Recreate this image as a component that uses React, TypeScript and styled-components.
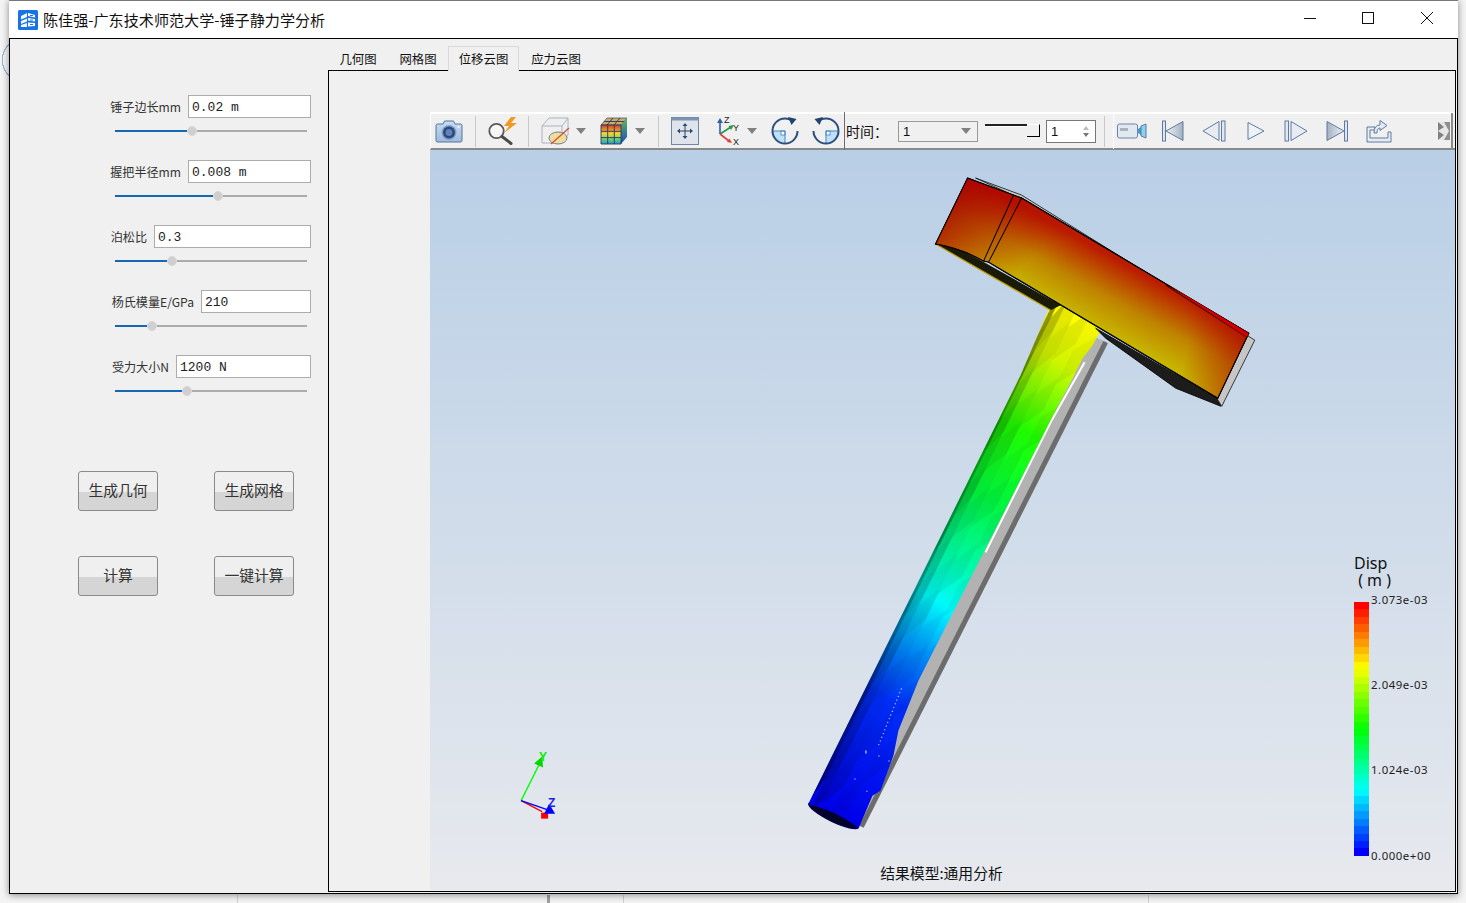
import styled, { createGlobalStyle } from 'styled-components'

const GlobalStyle = createGlobalStyle`
  html, body {
    margin: 0;
    padding: 0;
    overflow: hidden;
  }
  * {
    box-sizing: border-box;
  }
`

const cjk = `"Noto Sans CJK SC", "Noto Sans", sans-serif`

const Desktop = styled.div`
  width: 1466px;
  height: 903px;
  padding-left: 9px;
  font-family: ${cjk};
  background:
    radial-gradient(circle at 24px 60px, transparent 21px, #8fb4d6 21px, #8fb4d6 22px, transparent 22.5px),
    linear-gradient(#d0d0d0, #d0d0d0) 237px 895px / 1px 8px no-repeat,
    linear-gradient(#a0a0a0, #a0a0a0) 547px 895px / 3px 8px no-repeat,
    linear-gradient(#d0d0d0, #d0d0d0) 623px 895px / 1px 8px no-repeat,
    linear-gradient(#d0d0d0, #d0d0d0) 1148px 895px / 1px 8px no-repeat,
    #f4f4f4;
`

const Window = styled.div`
  width: 1449px;
  height: 894px;
  display: flex;
  flex-direction: column;
  background: #fff;
  border-top: 1px solid #777;
  box-shadow: 0 1px 7px rgba(0, 0, 0, 0.45);
`

const TitleBar = styled.header`
  height: 37px;
  flex: none;
  display: flex;
  align-items: center;
  padding-left: 9px;
`

const AppTitle = styled.span`
  margin: 0 0 2px 5px;
  font-size: 15.1px;
  color: #111;
  white-space: nowrap;
`

const WinControls = styled.div`
  display: flex;
  margin: 0 2px 3px auto;
`

const WinButton = styled.span`
  width: 58.5px;
  height: 34px;
  display: flex;
  align-items: center;
  justify-content: center;
`

const Client = styled.main`
  flex: 1;
  min-height: 0;
  display: flex;
  background: #f0f0f0;
  border: 1px solid #000;
`

const SidePanel = styled.aside`
  width: 318px;
  flex: none;
  padding-top: 56px;
`

const Field = styled.div`
  height: 65px;
  padding-right: 17px;
`

const FieldRow = styled.div`
  height: 23px;
  display: flex;
  justify-content: flex-end;
  align-items: center;
  gap: 7px;
`

const FieldLabel = styled.label`
  font-size: 12.1px;
  color: #333;
  white-space: nowrap;
`

const FieldInput = styled.div<{ $w: number }>`
  width: ${(p) => p.$w}px;
  height: 23px;
  background: #fff;
  border: 1px solid #acacac;
  padding-left: 3px;
  font: 13px/24px "Liberation Mono", monospace;
  color: #222;
`

const Slider = styled.div`
  width: 192px;
  height: 11px;
  margin: 7px 0 0 105px;
  display: flex;
  align-items: center;
`

const SliderFill = styled.span<{ $w: number }>`
  width: ${(p) => p.$w}px;
  height: 2px;
  background: #1768b4;
`

const SliderThumb = styled.span`
  width: 10px;
  height: 10px;
  flex: none;
  border-radius: 50%;
  background: #cfcfcf;
  border: 1px solid #d8d8d8;
`

const SliderRest = styled.span`
  flex: 1;
  height: 2px;
  background: #ababab;
`

const ButtonGrid = styled.div`
  display: grid;
  grid-template-columns: 80px 80px;
  grid-auto-rows: 40px;
  column-gap: 56px;
  row-gap: 45px;
  margin: 51px 0 0 68px;
`

const ActionButton = styled.button`
  border: 1px solid #8a8a8a;
  border-radius: 3px;
  padding: 0 0 3px;
  font-family: ${cjk};
  font-size: 14.8px;
  color: #333;
  background: linear-gradient(#efefef 52%, #d5d5d5 52%);
`

const TabArea = styled.section`
  flex: 1;
  min-width: 0;
  display: flex;
  flex-direction: column;
  padding-top: 7px;
`

const TabBar = styled.nav`
  height: 25px;
  flex: none;
  display: flex;
  position: relative;
  z-index: 1;
  margin-bottom: -1px;
`

const Tab = styled.span<{ $w: number; $active?: boolean }>`
  width: ${(p) => p.$w}px;
  height: 25px;
  display: flex;
  align-items: center;
  justify-content: center;
  font-size: 12.4px;
  color: #111;
  border: 1px solid ${(p) => (p.$active ? '#d9d9d9' : 'transparent')};
  border-bottom: none;
  background: ${(p) => (p.$active ? '#f0f0f0' : 'transparent')};
`

const TabPanel = styled.div`
  flex: 1;
  min-height: 0;
  margin: 0 1px 1px 0;
  padding: 41px 0 1px 101px;
  background: #f0f0f0;
  border: 1px solid #000;
`

const Viewer = styled.div`
  height: 100%;
  display: flex;
  flex-direction: column;
`

const ToolBar = styled.div`
  height: 38px;
  flex: none;
  display: flex;
  align-items: center;
  background: #f0f0f0;
  border-top: 2px solid #fff;
  border-left: 1px solid #fff;
  border-bottom: 2px solid #8a8a8a;
`

const Tool = styled.span<{ $ml: number }>`
  display: flex;
  flex: none;
  margin-left: ${(p) => p.$ml}px;
`

const Sep = styled.span<{ $ml: number }>`
  width: 1px;
  height: 31px;
  flex: none;
  margin-left: ${(p) => p.$ml}px;
  background: #c8c8c8;
`

const DarkSep = styled(Sep)`
  height: 38px;
  background: #6e6e6e;
`

const Caret = styled.span<{ $ml: number }>`
  width: 0;
  height: 0;
  flex: none;
  margin-left: ${(p) => p.$ml}px;
  border-left: 5px solid transparent;
  border-right: 5px solid transparent;
  border-top: 6px solid #808080;
`

const TimeLabel = styled.span`
  width: 38px;
  flex: none;
  margin-left: 1px;
  font-size: 14px;
  color: #111;
  white-space: nowrap;
`

const Combo = styled.div`
  width: 80px;
  height: 21px;
  flex: none;
  margin-left: 14px;
  padding: 0 6px 0 4px;
  display: flex;
  align-items: center;
  justify-content: space-between;
  border: 1px solid #9a9a9a;
  font: 13px "Liberation Sans", sans-serif;
  color: #111;
`

const TimeSlider = styled.div`
  width: 55px;
  height: 14px;
  flex: none;
  margin-left: 7px;
  display: flex;
  align-items: flex-start;
`

const TimeTrack = styled.span`
  flex: 1;
  height: 3px;
  border-top: 2px solid #222;
  border-bottom: 1px solid #fff;
`

const TimeHandle = styled.span`
  width: 13px;
  height: 13px;
  border-right: 1px solid #000;
  border-bottom: 1px solid #000;
  border-top: 1px solid #fff;
  background: #f0f0f0;
`

const Spin = styled.div`
  width: 50px;
  height: 23px;
  flex: none;
  margin-left: 6px;
  padding: 0 6px 0 4px;
  display: flex;
  align-items: center;
  justify-content: space-between;
  background: #fff;
  border: 1px solid #777;
  font: 13px "Liberation Sans", sans-serif;
  color: #111;
`

const SpinArrows = styled.span`
  display: flex;
  flex-direction: column;
  gap: 3px;
`

const SpinArrow = styled.span<{ $down?: boolean }>`
  width: 0;
  height: 0;
  border-left: 3px solid transparent;
  border-right: 3px solid transparent;
  ${(p) => (p.$down ? 'border-top: 4px solid #777;' : 'border-bottom: 4px solid #bbb;')}
`

const PlayBar = styled.div`
  flex: 1;
  height: 36px;
  margin: 0 2px 0 8px;
  display: flex;
  align-items: center;
  border-left: 1px solid #fff;
  border-right: 2px solid #8a8a8a;
`

const Viewport = styled.div`
  flex: 1;
  min-height: 0;
  position: relative;
  background: linear-gradient(#b9cfe6, #e7e9ee);
`

const Scene = styled.svg`
  display: block;
  width: 100%;
  height: 100%;
`

const Legend = styled.div`
  position: absolute;
  left: 924px;
  top: 405px;
  width: 100px;
`

const LegendTitle = styled.div`
  font: 16px/17px "Noto Sans", sans-serif;
  color: #111;
`

const LegendBody = styled.div`
  display: flex;
  margin-top: 13px;
`

const LegendBar = styled.div`
  width: 15px;
  height: 254px;
  display: flex;
  flex-direction: column;
`

const LegendTicks = styled.div`
  height: 267px;
  margin: -8px 0 0 2px;
  display: flex;
  flex-direction: column;
  justify-content: space-between;
  font: 11.4px/1 "Noto Sans", sans-serif;
  letter-spacing: 0.55px;
  color: #222;
`

const ResultCaption = styled.div`
  position: absolute;
  left: 0;
  right: 2px;
  bottom: 7px;
  text-align: center;
  font-size: 14.8px;
  color: #111;
`

const fields = [
  { label: '锤子边长mm', value: '0.02 m', w: 123, fill: 72 },
  { label: '握把半径mm', value: '0.008 m', w: 123, fill: 98 },
  { label: '泊松比', value: '0.3', w: 157, fill: 52 },
  { label: '杨氏模量E/GPa', value: '210', w: 110, fill: 32 },
  { label: '受力大小N', value: '1200 N', w: 135, fill: 67 },
]

const legendColor = (t: number) => {
  const c = (v: number) => Math.round(Math.max(0, Math.min(1, v)) * 255)
  const r = c(2 - t * 4 + 0)
  const g = t < 0.25 ? c(t * 4) : t > 0.75 ? c((1 - t) * 4) : 255
  const b = c(t * 4 - 2)
  return `rgb(${r},${g},${b})`
}

// top of the bar is red, bottom is blue
const bands = Array.from({ length: 34 }, (_, i) => legendColor(i / 33))

// shaded quads that give the handle its faceted look
const facets = () => {
  const out: { d: string; o: number }[] = []
  const cols = [0, 0.08, 0.22, 0.44, 0.7, 1]
  const rows = 15
  const p = (u: number, v: number) => {
    const lx = 1052 + (808 - 1052) * v
    const ly = 304 + (803 - 304) * v
    const rx = 1100 + (858 - 1100) * v
    const ry = 330 + (828 - 330) * v
    return `${(lx + (rx - lx) * u).toFixed(1)},${(ly + (ry - ly) * u).toFixed(1)}`
  }
  for (let i = 0; i < rows; i++) {
    for (let j = 0; j < cols.length - 1; j++) {
      const shift = ((j % 2) * 0.5) / rows
      const v0 = (i - 0.5) / rows + shift
      const v1 = (i + 0.5) / rows + shift
      const jitter = ((i * 7 + j * 13) % 5) * 0.018
      const base = [0.42, 0.2, 0.07, 0.02, 0][j]
      // diamonds: the two long sides lean towards the neighbour column
      const lean = 0.35 / rows
      out.push({
        d: `${p(cols[j], v0 + lean)} ${p(cols[j + 1], v0 - lean)} ${p(cols[j + 1], v1 - lean)} ${p(cols[j], v1 + lean)}`,
        o: base + jitter,
      })
    }
  }
  return out
}

const BrandIcon = () => (
  <svg width="20" height="20" viewBox="0 0 20 20">
    <rect width="20" height="20" rx="1.5" fill="#1873e6" />
    <path d="M3 6l6-3v4L3 9.5zM3 11l6-2.5v3L3 14zM3 15l6-2v4H3z" fill="#fff" opacity="0.95" />
    <path d="M10 3l7 2v2.5l-7-1.5zM10 8l7 1v2.5l-7-1zM10 12.5l7 .5v3l-7 .5z" fill="#fff" />
    <path d="M12 5.5h3M12 10h3M12 14.5h3" stroke="#1873e6" strokeWidth="1" />
  </svg>
)

const CameraIcon = () => (
  <svg width="28" height="24" viewBox="0 0 28 24">
    <defs>
      <linearGradient id="camBody" x1="0" y1="0" x2="0" y2="1">
        <stop offset="0" stopColor="#c9dcf0" />
        <stop offset="1" stopColor="#9dbbdc" />
      </linearGradient>
    </defs>
    <path d="M1 6.5Q1 5 2.5 5H8l1.5-3h9L20 5h5.5Q27 5 27 6.5v15q0 1.5-1.5 1.5h-23Q1 23 1 21.5z" fill="url(#camBody)" stroke="#54749f" />
    <circle cx="14" cy="13.5" r="7.5" fill="#7f9cc8" />
    <circle cx="14" cy="13.5" r="6" fill="#2d4776" />
    <circle cx="14" cy="13.5" r="3.4" fill="#5f84bc" />
    <circle cx="23.5" cy="8" r="1" fill="#fff" />
  </svg>
)

const SearchBoltIcon = () => (
  <svg width="30" height="28" viewBox="0 0 30 28">
    <circle cx="8.500" cy="14" r="7.200" fill="#f6f6f6" stroke="#5a5a5a" strokeWidth="1.8" />
    <path d="M14 19.500l9 7" stroke="#4a4a4a" strokeWidth="3" strokeLinecap="round" />
    <path d="M23 0l-7 9h5l-5 7 13-10h-6l5-6z" fill="#ef9a25" />
  </svg>
)

const ClipCubeIcon = () => (
  <svg width="30" height="28" viewBox="0 0 30 28">
    <path d="M1 9l7-8h19v17l-6 8H1z" fill="#efefef" stroke="#a9b4c4" />
    <path d="M1 9h20v17M21 9l6-8" fill="none" stroke="#a9b4c4" />
    <ellipse cx="17" cy="21" rx="9" ry="6" fill="#f1dc9a" stroke="#6c7f99" />
    <path d="M10 27L28 11" stroke="#c8553f" strokeWidth="1.4" />
  </svg>
)

const ContourCubeIcon = () => (
  <svg width="28" height="28" viewBox="0 0 28 28">
    <defs>
      <linearGradient id="cubeFront" x1="0" y1="0" x2="0" y2="1">
        <stop offset="0" stopColor="#d83a2a" />
        <stop offset="0.45" stopColor="#f5d13a" />
        <stop offset="0.75" stopColor="#62d07a" />
        <stop offset="1" stopColor="#2a90d8" />
      </linearGradient>
      <linearGradient id="cubeSide" x1="0" y1="0" x2="0" y2="1">
        <stop offset="0" stopColor="#5cb858" />
        <stop offset="1" stopColor="#1c4fb8" />
      </linearGradient>
    </defs>
    <path d="M1 8l6-7h20l-6 7z" fill="#cfa86b" stroke="#33506f" strokeWidth="0.7" />
    <path d="M21 8l6-7v19l-6 7z" fill="url(#cubeSide)" />
    <rect x="1" y="8" width="20" height="19" fill="url(#cubeFront)" />
    <path d="M1 8h20v19H1zM7.7 8v19M14.3 8v19M1 14.3h20M1 20.6h20M7 8l6-7M14 8l6-7M4 4.5h20" fill="none" stroke="#263b52" strokeWidth="0.9" />
  </svg>
)

const FitIcon = () => (
  <svg width="28" height="28" viewBox="0 0 28 28">
    <rect x="0.5" y="0.5" width="27" height="27" fill="#dfe4ec" stroke="#6f86a8" />
    <rect x="0.5" y="0.5" width="27" height="3" fill="#7e93b3" />
    <path d="M14 8v12M8 14h12" stroke="#2a3f5f" />
    <path d="M14 6l2.500 3h-5zM14 22l2.500-3h-5zM6 14l3-2.500v5zM22 14l-3-2.500v5z" fill="#2a4a72" />
  </svg>
)

const AxesIcon = () => (
  <svg width="24" height="30" viewBox="0 0 24 30">
    <path d="M4 18V6" stroke="#2c5fb0" strokeWidth="1.6" />
    <path d="M4 2l3 5H1z" fill="#2c5fb0" />
    <path d="M4 18l11-7" stroke="#1f9a4a" strokeWidth="1.6" />
    <path d="M18 9l-3 5-2.500-4z" fill="#1f9a4a" />
    <path d="M4 18l9 7" stroke="#e23c3c" strokeWidth="1.6" />
    <path d="M16 27l-5-1 2.500-3.500z" fill="#e23c3c" />
    <text x="8" y="7" fontSize="9" fontFamily="Liberation Sans, sans-serif" fill="#222">Z</text>
    <text x="17" y="15" fontSize="9" fontFamily="Liberation Sans, sans-serif" fill="#222">Y</text>
    <text x="17" y="29" fontSize="9" fontFamily="Liberation Sans, sans-serif" fill="#222">X</text>
  </svg>
)

const RotateIcon = ({ flip }: { flip?: boolean }) => (
  <svg width="28" height="28" viewBox="0 0 28 28">
    <g transform={flip ? 'translate(28 0) scale(-1 1)' : undefined}>
      <path d="M1.500 14A12.500 12.500 0 0 0 14 26.500V14z" fill="#bfe0f8" />
      <rect x="10" y="14" width="4" height="4" fill="#fff" stroke="#3f7fb8" strokeWidth="0.8" />
      <path d="M1.500 14h12.500v12.500" fill="none" stroke="#3f88c8" strokeWidth="1" />
      <path d="M21 3.500A12.500 12.500 0 0 0 14 1.500 12.500 12.500 0 1 0 26.500 14" fill="none" stroke="#2c4f7c" strokeWidth="2" />
      <path d="M17 0l8.500 2-5 6z" fill="#20446e" />
    </g>
  </svg>
)

const VideoIcon = () => (
  <svg width="30" height="16" viewBox="0 0 30 16">
    <rect x="0.500" y="1" width="20" height="14" rx="2" fill="#e2e8f0" stroke="#6d84a6" />
    <rect x="3" y="5" width="8" height="3" fill="#a8b2c0" />
    <path d="M21 6l3-2v8l-3-2z" fill="#3e9fd0" />
    <path d="M24 3l5-2v14l-5-2z" fill="#8fd0e8" stroke="#5b7ba5" />
  </svg>
)

const FirstIcon = () => (
  <svg width="22" height="22" viewBox="0 0 22 22">
    <defs>
      <linearGradient id="stepFill" x1="0" y1="0" x2="1" y2="0">
        <stop offset="0" stopColor="#eef1f5" />
        <stop offset="1" stopColor="#a4b0c0" />
      </linearGradient>
    </defs>
    <rect x="0.500" y="1" width="3" height="20" fill="#dfe5ee" stroke="#5f7ba3" />
    <path d="M4 11L21 1.500v19z" fill="url(#stepFill)" stroke="#5f7ba3" />
  </svg>
)

const PrevIcon = () => (
  <svg width="24" height="22" viewBox="0 0 24 22">
    <path d="M1 11l16-9.500v19z" fill="#e8ecf2" stroke="#5f7ba3" />
    <rect x="19.500" y="1" width="3.500" height="20" fill="#e2e8f0" stroke="#5f7ba3" />
  </svg>
)

const PlayIcon = () => (
  <svg width="18" height="20" viewBox="0 0 18 20">
    <path d="M1 1.500L17 10 1 18.500z" fill="#eef1f6" stroke="#5f7ba3" />
  </svg>
)

const NextIcon = () => (
  <svg width="24" height="22" viewBox="0 0 24 22">
    <rect x="1" y="1" width="3.500" height="20" fill="#e2e8f0" stroke="#5f7ba3" />
    <path d="M7 1.500l16 9.500-16 9.500z" fill="#e8ecf2" stroke="#5f7ba3" />
  </svg>
)

const LastIcon = () => (
  <svg width="22" height="22" viewBox="0 0 22 22">
    <defs>
      <linearGradient id="stepFillEnd" x1="0" y1="0" x2="1" y2="0">
        <stop offset="0" stopColor="#a4b0c0" />
        <stop offset="1" stopColor="#eef1f5" />
      </linearGradient>
    </defs>
    <path d="M1 1.500L18 11 1 20.500z" fill="url(#stepFillEnd)" stroke="#5f7ba3" />
    <rect x="18.500" y="1" width="3" height="20" fill="#dfe5ee" stroke="#5f7ba3" />
  </svg>
)

const ExportIcon = () => (
  <svg width="26" height="24" viewBox="0 0 26 24">
    <path d="M1 8h8v3H4v8h18v-6h3v10H1z" fill="#e6ebf2" stroke="#5f7ba3" />
    <path d="M8 14q0-8 6-8V1.500l7 5-7 5V9q-3 0-3 5z" fill="#e6ebf2" stroke="#5f7ba3" />
  </svg>
)

const OverflowIcon = () => (
  <svg width="12" height="18" viewBox="0 0 12 18" opacity="0.8">
    <rect width="12" height="18" fill="#e6e6e6" />
    <path d="M0 0l6 5-6 4 6 4-6 5z" fill="#666" />
    <path d="M6 0h6v18H6l5-9z" fill="#777" />
  </svg>
)

const Hammer = () => (
  <>
    <defs>
      <linearGradient id="handleJet" gradientUnits="userSpaceOnUse" x1="1072" y1="320" x2="833" y2="812">
        <stop offset="0" stopColor="#ffff00" />
        <stop offset="0.08" stopColor="#d8ff00" />
        <stop offset="0.22" stopColor="#20ff00" />
        <stop offset="0.36" stopColor="#00ff40" />
        <stop offset="0.49" stopColor="#00ffb0" />
        <stop offset="0.57" stopColor="#00ffff" />
        <stop offset="0.67" stopColor="#0090ff" />
        <stop offset="0.77" stopColor="#0030ff" />
        <stop offset="1" stopColor="#0000e8" />
      </linearGradient>
      <linearGradient id="headBase" gradientUnits="userSpaceOnUse" x1="1120" y1="262" x2="1085" y2="325">
        <stop offset="0" stopColor="#bb1c00" />
        <stop offset="0.5" stopColor="#bf8200" />
        <stop offset="1" stopColor="#c8bc00" />
      </linearGradient>
      <radialGradient id="headEnds" gradientUnits="userSpaceOnUse" cx="0" cy="0" r="1" gradientTransform="translate(1085 345) rotate(29) scale(195 240)">
        <stop offset="0.5" stopColor="#b00000" stopOpacity="0" />
        <stop offset="1" stopColor="#a80000" stopOpacity="0.85" />
      </radialGradient>
      <clipPath id="handleClip">
        <path d="M1052,300 L1020,375 L808,803 Q830,820 858,828 L872,795 L880,790 L893,755 L898,730 L918,680 L1050,420 L1072,378 L1082,358 L1092,345 L1102,326 Z" />
      </clipPath>
    </defs>

    {/* grey back faces of the undeformed handle */}
    <path d="M1090,335 L1106,342 L862,826 L855,825 L850,780 Z" fill="#b2b2b2" />
    <path d="M1105,342 L861,826" stroke="#6c6c6c" strokeWidth="5" />
    <path d="M1084,362 L1050,422 L985,552" stroke="#fff" strokeWidth="2" fill="none" />

    <ellipse cx="833" cy="815" rx="28" ry="6.500" transform="rotate(26 833 815)" fill="#000050" />
    <g clipPath="url(#handleClip)">
      <rect x="800" y="295" width="310" height="540" fill="url(#handleJet)" />
      {facets().map((f, i) => (
        <polygon key={i} points={f.d} fill="#000" opacity={f.o} />
      ))}
    </g>
    <path d="M808,804 Q832,808 858,827 Q830,826 808,804 Z" fill="#02022a" />
    <path d="M901,688 L878,745" stroke="#fff" strokeWidth="1" strokeDasharray="1 3" />
    <path d="M865,750h1v3h-1zM854,778h1v1h-1zM866,790h1v1h-1zM888,760h1v1h-1zM878,755h1v1h-1z" fill="#fff" />

    {/* underside of the head */}
    <path d="M935,244 Q960,248 983,262 L1060,305 L1050,310 Z" fill="#1a1a08" />
    <path d="M935,244 L1050,310" stroke="#c8a400" strokeWidth="1.200" />
    <path d="M1095,328 L1216,398 L1220,406 L1175,388 L1105,338 Z" fill="#1c1c1c" stroke="#000" strokeWidth="0.800" />

    {/* grey back sliver of the head */}
    <path d="M975,178 L1021,195 L1254,340 L1221,406 L1216,398 L1248,333 L1021,199 Z" fill="#c6c6c6" stroke="#111" strokeWidth="0.800" />

    <g stroke="#000" strokeWidth="1">
      <path d="M967,178 L1021,198 L1248,333 L1217,398 L988,262 L983,261 Q960,248 935,244 Z" fill="url(#headBase)" />
      <path d="M967,178 L1021,198 L1248,333 L1217,398 L988,262 L983,261 Q960,248 935,244 Z" fill="url(#headEnds)" />
      <path d="M1013,195 L983,261 M1021,198 L988,262" fill="none" />
      <path d="M1165,285 L1246,337" fill="none" strokeWidth="0.800" />
    </g>
    <path d="M1165,283 L1248,333 L1246,337 Z" fill="#d00000" />
  </>
)

const Triad = () => (
  <g>
    <path d="M521,800 L540,762" stroke="#00ff00" strokeWidth="1.300" />
    <path d="M542,756 L543,767 L534,763 Z" fill="#00d800" />
    <text x="539" y="760" fontSize="12" fontWeight="700" fontFamily="Liberation Sans, sans-serif" fill="#00f000">Y</text>
    <path d="M521,800 L542,811" stroke="#ff0000" strokeWidth="1.200" />
    <path d="M521,800 L547,809" stroke="#0000ff" strokeWidth="1.500" />
    <path d="M541,812 L548,812 L548,818 L541,818 Z" fill="#ff0000" />
    <path d="M549,803 L555,813 L544,813 Z" fill="#0000ff" />
    <text x="548" y="806" fontSize="12" fontWeight="700" fontFamily="Liberation Sans, sans-serif" fill="#2020e0">Z</text>
  </g>
)

const WindowButtons = () => (
  <WinControls>
    <WinButton>
      <svg width="12" height="12" viewBox="0 0 12 12">
        <path d="M0 6.500h12" stroke="#111" />
      </svg>
    </WinButton>
    <WinButton>
      <svg width="12" height="12" viewBox="0 0 12 12">
        <rect x="0.500" y="0.500" width="11" height="11" fill="none" stroke="#111" />
      </svg>
    </WinButton>
    <WinButton>
      <svg width="12" height="12" viewBox="0 0 12 12">
        <path d="M0 0l12 12M12 0L0 12" stroke="#111" />
      </svg>
    </WinButton>
  </WinControls>
)

export default function App() {
  return (
    <Desktop>
      <GlobalStyle />
      <Window>
        <TitleBar>
          <BrandIcon />
          <AppTitle>陈佳强-广东技术师范大学-锤子静力学分析</AppTitle>
          <WindowButtons />
        </TitleBar>
        <Client>
          <SidePanel>
            {fields.map((f) => (
              <Field key={f.label}>
                <FieldRow>
                  <FieldLabel>{f.label}</FieldLabel>
                  <FieldInput $w={f.w}>{f.value}</FieldInput>
                </FieldRow>
                <Slider>
                  <SliderFill $w={f.fill} />
                  <SliderThumb />
                  <SliderRest />
                </Slider>
              </Field>
            ))}
            <ButtonGrid>
              <ActionButton>生成几何</ActionButton>
              <ActionButton>生成网格</ActionButton>
              <ActionButton>计算</ActionButton>
              <ActionButton>一键计算</ActionButton>
            </ButtonGrid>
          </SidePanel>
          <TabArea>
            <TabBar>
              <Tab $w={60}>几何图</Tab>
              <Tab $w={60}>网格图</Tab>
              <Tab $w={71} $active>位移云图</Tab>
              <Tab $w={74}>应力云图</Tab>
            </TabBar>
            <TabPanel>
              <Viewer>
                <ToolBar>
                  <Tool $ml={4}><CameraIcon /></Tool>
                  <Sep $ml={12} />
                  <Tool $ml={12}><SearchBoltIcon /></Tool>
                  <Sep $ml={10} />
                  <Tool $ml={12}><ClipCubeIcon /></Tool>
                  <Caret $ml={5} />
                  <Tool $ml={14}><ContourCubeIcon /></Tool>
                  <Caret $ml={7} />
                  <Sep $ml={13} />
                  <Tool $ml={12}><FitIcon /></Tool>
                  <Tool $ml={17}><AxesIcon /></Tool>
                  <Caret $ml={7} />
                  <Tool $ml={14}><RotateIcon /></Tool>
                  <Tool $ml={13}><RotateIcon flip /></Tool>
                  <DarkSep $ml={4} />
                  <TimeLabel>时间：</TimeLabel>
                  <Combo>
                    1
                    <Caret $ml={0} />
                  </Combo>
                  <TimeSlider>
                    <TimeTrack />
                    <TimeHandle />
                  </TimeSlider>
                  <Spin>
                    1
                    <SpinArrows>
                      <SpinArrow />
                      <SpinArrow $down />
                    </SpinArrows>
                  </Spin>
                  <Sep $ml={8} />
                  <PlayBar>
                    <Tool $ml={3}><VideoIcon /></Tool>
                    <Tool $ml={15}><FirstIcon /></Tool>
                    <Tool $ml={18}><PrevIcon /></Tool>
                    <Tool $ml={21}><PlayIcon /></Tool>
                    <Tool $ml={19}><NextIcon /></Tool>
                    <Tool $ml={18}><LastIcon /></Tool>
                    <Tool $ml={18}><ExportIcon /></Tool>
                    <Tool $ml={46}><OverflowIcon /></Tool>
                  </PlayBar>
                </ToolBar>
                <Viewport>
                  <Scene viewBox="430 150 1024 740" preserveAspectRatio="xMinYMin slice">
                    <Hammer />
                    <Triad />
                  </Scene>
                  <Legend>
                    <LegendTitle>
                      Disp
                      <br />
                      &nbsp;( m )
                    </LegendTitle>
                    <LegendBody>
                      <LegendBar>
                        {bands.map((c) => (
                          <span key={c} style={{ flex: 1, background: c }} />
                        ))}
                      </LegendBar>
                      <LegendTicks>
                        <span>3.073e-03</span>
                        <span>2.049e-03</span>
                        <span>1.024e-03</span>
                        <span>0.000e+00</span>
                      </LegendTicks>
                    </LegendBody>
                  </Legend>
                  <ResultCaption>结果模型:通用分析</ResultCaption>
                </Viewport>
              </Viewer>
            </TabPanel>
          </TabArea>
        </Client>
      </Window>
    </Desktop>
  )
}
